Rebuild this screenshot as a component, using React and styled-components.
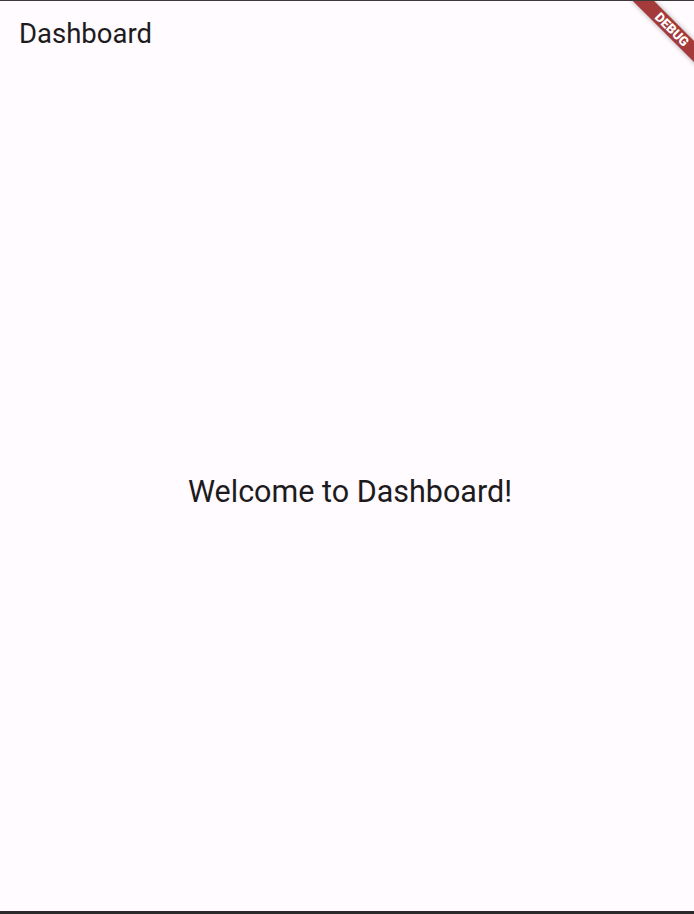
import styled, { createGlobalStyle } from "styled-components";

const GlobalStyle = createGlobalStyle`
  html, body {
    margin: 0;
    padding: 0;
    background: #fffbfe;
  }
  body {
    font-family: Roboto, "Noto Sans", sans-serif;
  }
`;

const Window = styled.div`
  position: relative;
  width: 100vw;
  height: 914px;
  display: flex;
  flex-direction: column;
  background: #fffbfe;
  border-top: 1px solid #3a3a3a;
  border-bottom: 3px solid #2a2a2a;
  box-sizing: border-box;
  overflow: hidden;
`;

const AppBar = styled.header`
  height: 70px;
  box-sizing: border-box;
  display: flex;
  align-items: center;
  padding: 0 19px 5px;
  flex-shrink: 0;
`;

const Title = styled.h1`
  margin: 0;
  font-size: 27.5px;
  font-weight: 400;
  color: #1d1b20;
  letter-spacing: 0;
`;

const Body = styled.main`
  flex: 1;
  display: flex;
  align-items: center;
  justify-content: center;
  padding-left: 6px;
`;

const Welcome = styled.p`
  margin: 0;
  font-size: 30.5px;
  font-weight: 400;
  color: #1d1b20;
`;

// debug ribbon sits over the corner of the app
const Banner = styled.div`
  position: absolute;
  top: 21px;
  right: -28px;
  width: 100px;
  height: 15px;
  transform: rotate(45deg);
  background: #a53a3b;
  box-shadow: 0 0 5px rgba(0, 0, 0, 0.35);
  color: #fff;
  font-size: 13px;
  font-weight: 900;
  line-height: 15px;
  text-align: center;
`;

const App = () => {
  return (
    <>
      <GlobalStyle />
      <Window>
        <AppBar>
          <Title>Dashboard</Title>
        </AppBar>
        <Body>
          <Welcome>Welcome to Dashboard!</Welcome>
        </Body>
        <Banner>DEBUG</Banner>
      </Window>
    </>
  );
};

export default App;
